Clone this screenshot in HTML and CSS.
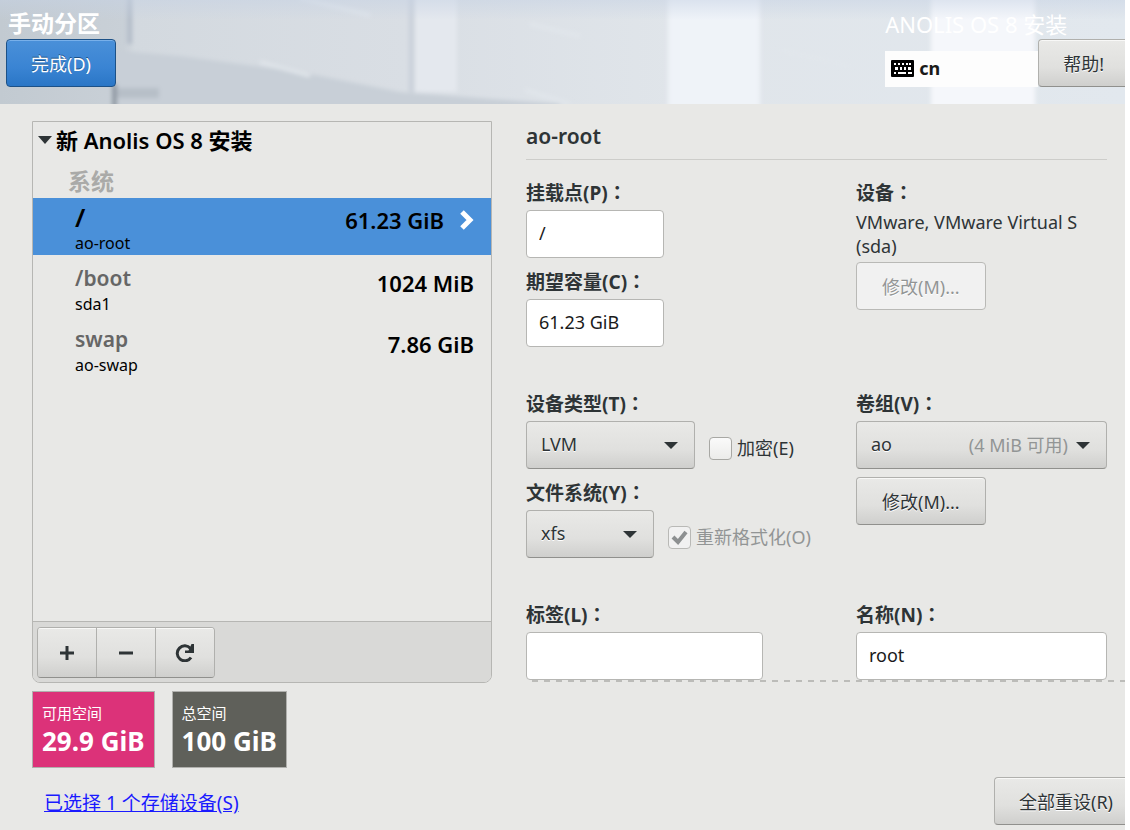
FILE: index.html
```
<!DOCTYPE html>
<html lang="zh-CN">
    <head>
        <meta charset="UTF-8">
        <title>手动分区</title>
        <link rel="stylesheet" href="styles.css">
    </head>
    <body>
        <header class="header">
            <svg class="header-bg" viewBox="0 0 1125 104" preserveAspectRatio="none" aria-hidden="true">
                <defs>
                    <linearGradient id="wall" x1="0" x2="1" y1="0" y2="0">
                        <stop offset="0" stop-color="#c2cad1"/>
                        <stop offset=".11" stop-color="#c9d0d7"/>
                        <stop offset=".12" stop-color="#d3d9df"/>
                        <stop offset=".36" stop-color="#d9dee4"/>
                        <stop offset=".6" stop-color="#e0e5ea"/>
                        <stop offset="1" stop-color="#e2e8ee"/>
                    </linearGradient>
                    <linearGradient id="sky" x1="0" x2="0" y1="0" y2="1">
                        <stop offset="0" stop-color="#c6d2e4" stop-opacity=".5"/>
                        <stop offset="1" stop-color="#c6d2e4" stop-opacity="0"/>
                    </linearGradient>
                    <filter id="soft" x="-10%" y="-20%" width="120%" height="140%"><feGaussianBlur stdDeviation="2"/></filter>
                </defs>
                <rect width="1125" height="104" fill="url(#wall)"/>
                <g filter="url(#soft)">
                    <path d="M110 50L180 56L300 72L400 92L560 104L560 112L110 112z" fill="#c8cfd7"/>
                    <path d="M117 88h42v10h-42z" fill="#b7bfc8"/>
                    <path d="M112 84h5v28h-5z" fill="#8f98a2"/>
                    <path d="M127-6h5v50h-5z" fill="#b3bcc8"/>
                    <path d="M409-6h5v98h-5z" fill="#c9d0d9"/>
                    <path d="M300-2L370 15M260 62L310 76M530 24L580 36M525 90L570 104M780 50L850 66M1035 10L1125 14" stroke="#e2e7ec" stroke-width="3" fill="none"/>
                    <path d="M415-6h42v98h-42z" fill="#e4e8ee"/>
                    <path d="M668-6h92v120h-92z" fill="#eff3f8"/>
                    <path d="M931-6h104v120h-104z" fill="#f5f7fb"/>
                </g>
                <rect width="1125" height="20" fill="url(#sky)"/>
            </svg>
            <div class="header-left">
                <h1 class="title">手动分区</h1>
                <button class="btn btn-primary" type="button">完成(D)</button>
            </div>
            <div class="header-right">
                <div class="product">
                    <div class="product-name">ANOLIS OS 8 安装</div>
                    <div class="keyboard">
                        <svg width="23" height="17" viewBox="0 0 23 17" aria-hidden="true">
                            <rect width="23" height="17" rx="1" fill="#000"/>
                            <path fill="#fff" d="M3 3h2v2h-2zM7 3h2v2h-2zM11 3h2v2h-2zM15 3h2v2h-2zM18 3h2v2h-2zM4 7h3v3h-3zM9 7h2v3h-2zM13 7h2v3h-2zM17 7h3v3h-3zM3 12h2v2h-2zM7 12h8v2h-8zM17 12h4v2h-4z"/>
                        </svg>
                        <span>cn</span>
                    </div>
                </div>
                <button class="btn btn-cut btn-help" type="button">帮助!</button>
            </div>
        </header>

        <main class="main">
            <section class="panel">
                <div class="tree">
                    <h2 class="tree-title">
                        <svg width="14" height="8" viewBox="0 0 14 8" aria-hidden="true"><path d="M0 0h14L7 8z" fill="#2e3436"/></svg>
                        新 Anolis OS 8 安装
                    </h2>
                    <h3 class="group">系统</h3>
                    <ul class="parts">
                        <li class="part on">
                            <div>
                                <div class="mount">/</div>
                                <div class="dev">ao-root</div>
                            </div>
                            <div class="size">61.23 GiB</div>
                            <svg class="arrow" width="14" height="20" viewBox="0 0 14 20" aria-hidden="true"><path d="M2 2l8 8-8 8" fill="none" stroke="#fff" stroke-width="5"/></svg>
                        </li>
                        <li class="part">
                            <div>
                                <div class="mount">/boot</div>
                                <div class="dev">sda1</div>
                            </div>
                            <div class="size">1024 MiB</div>
                        </li>
                        <li class="part">
                            <div>
                                <div class="mount">swap</div>
                                <div class="dev">ao-swap</div>
                            </div>
                            <div class="size">7.86 GiB</div>
                        </li>
                    </ul>
                </div>
                <div class="toolbar">
                    <div class="tools">
                        <button type="button" aria-label="添加">
                            <svg width="16" height="16" viewBox="0 0 16 16"><path d="M8 1v14M1 8h14" stroke="#2e3436" stroke-width="3"/></svg>
                        </button>
                        <button type="button" aria-label="删除">
                            <svg width="16" height="16" viewBox="0 0 16 16"><path d="M1 8h14" stroke="#2e3436" stroke-width="3"/></svg>
                        </button>
                        <button type="button" aria-label="重新载入">
                            <svg width="20" height="18" viewBox="0 0 20 18"><path d="M16 13.500A7.500 7.500 0 1 1 15.500 4.500" fill="none" stroke="#2e3436" stroke-width="3"/><path d="M19 0v9h-9v-2.500h3.500L16.500 0z" fill="#2e3436"/></svg>
                        </button>
                    </div>
                </div>
            </section>

            <form class="detail">
                <h2 class="detail-title">ao-root</h2>
                <div class="fields">
                    <div class="cell">
                        <label class="label" for="mount">挂载点(P)<span lang="zh-TW">：</span></label>
                        <input class="input short" id="mount" type="text" value="/">
                        <label class="label" for="capacity">期望容量(C)<span lang="zh-TW">：</span></label>
                        <input class="input short" id="capacity" type="text" value="61.23 GiB">
                    </div>
                    <div class="cell">
                        <div class="label">设备<span lang="zh-TW">：</span></div>
                        <p class="device">VMware, VMware Virtual S (sda)</p>
                        <button class="btn" type="button" disabled>修改(M)...</button>
                    </div>
                    <div class="cell">
                        <label class="label" for="type">设备类型(T)<span lang="zh-TW">：</span></label>
                        <div class="line">
                            <select class="select type" id="type"><option>LVM</option></select>
                            <label class="check"><input type="checkbox">加密(E)</label>
                        </div>
                        <label class="label" for="fs">文件系统(Y)<span lang="zh-TW">：</span></label>
                        <div class="line">
                            <select class="select fs" id="fs"><option>xfs</option></select>
                            <label class="check off"><input type="checkbox" checked disabled>重新格式化(O)</label>
                        </div>
                    </div>
                    <div class="cell">
                        <label class="label" for="vg">卷组(V)<span lang="zh-TW">：</span></label>
                        <div class="vg">
                            <select class="select" id="vg"><option>ao</option></select>
                            <span class="free">(4 MiB 可用)</span>
                        </div>
                        <button class="btn" type="button">修改(M)...</button>
                    </div>
                    <div class="cell">
                        <label class="label" for="tag">标签(L)<span lang="zh-TW">：</span></label>
                        <input class="input mid" id="tag" type="text">
                    </div>
                    <div class="cell">
                        <label class="label" for="name">名称(N)<span lang="zh-TW">：</span></label>
                        <input class="input" id="name" type="text" value="root">
                    </div>
                </div>
            </form>
        </main>

        <footer class="footer">
            <div class="tiles">
                <div class="tile pink">
                    <div>可用空间</div>
                    <strong>29.9 GiB</strong>
                </div>
                <div class="tile gray">
                    <div>总空间</div>
                    <strong>100 GiB</strong>
                </div>
            </div>
            <div class="bottom">
                <a href="#">已选择 1 个存储设备(S)</a>
                <button class="btn btn-cut" type="button">全部重设(R)</button>
            </div>
        </footer>
    </body>
</html>
```
FILE: styles.css
```
*{ margin:0; padding:0; box-sizing:border-box; }
html{
    background: #fff;
}
body{
    min-height: 100vh;
    margin-right: 5px;
    display: flex;
    flex-direction: column;
    background: #e8e8e6;
    color: #2e3436;
    font: 18px/24px "Noto Sans","Noto Sans CJK SC",sans-serif;
}
button,input,select{
    font: inherit;
    color: inherit;
}
ul{ list-style: none; }

/* header */
.header{
    position: relative;
    height: 104px;
    display: flex;
    justify-content: space-between;
    overflow: hidden;
}
.header-bg{
    position: absolute;
    top: 0;
    left: 0;
    width: 100%;
    height: 100%;
}
.header-left,.header-right{
    position: relative;
}
.header-left{
    padding: 8px 0 0 6px;
}
.title{
    padding-left: 2px;
    margin-bottom: 1px;
    font-size: 23px;
    line-height: 30px;
    color: #fff;
}
.header-right{
    display: flex;
    align-items: flex-start;
    padding-top: 9px;
}
.product{
    width: 153px;
}
.product-name{
    margin-bottom: 12px;
    font-size: 22px;
    line-height: 30px;
    white-space: nowrap;
    color: #fff;
}
.keyboard{
    height: 36px;
    padding: 0 0 2px 6px;
    display: flex;
    align-items: center;
    gap: 5px;
    background: #fdfdfd;
    color: #1a1a1a;
    font-weight: bold;
}

/* buttons */
.btn{
    height: 48px;
    padding: 2px 25px 0;
    border: 1px solid #b0b0ad;
    border-bottom-color: #90908d;
    border-radius: 4px;
    background: linear-gradient(#e9e9e7,#e0e0de 60%,#cfcfcd);
    box-shadow: inset 0 1px #f8f8f7;
    text-shadow: 0 1px #fff;
    white-space: nowrap;
}
.btn:disabled{
    background: #f1f1f1;
    border-color: #b9b9b6;
    color: #929595;
    box-shadow: none;
}
.btn-primary{
    padding: 2px 24px 0;
    border-color: #1c5187;
    background: linear-gradient(#4a90d9,#3a84d3 60%,#2a76c6);
    box-shadow: inset 0 1px #78b0ea;
    color: #fff;
    text-shadow: 0 -1px #1c5187;
}
.btn-cut{
    padding-right: 12px;
    padding-left: 24px;
    border-right: 0;
    border-radius: 4px 0 0 4px;
}
.btn-help{
    margin-top: 30px;
    padding-right: 21px;
}

/* main */
.main{
    flex: 1;
    padding: 17px 0 0 32px;
    display: grid;
    grid-template-columns: 460fr 599fr;
    gap: 34px;
}
.panel{
    display: flex;
    flex-direction: column;
    border: 1px solid #b6b6b3;
    border-radius: 0 0 8px 8px;
    overflow: hidden;
}
.tree{
    flex: 1;
    color: #000;
}
.tree-title{
    padding: 3px 0 0 5px;
    display: flex;
    align-items: center;
    gap: 4px;
    font-size: 22px;
    line-height: 30px;
    font-weight: 600;
}
.group{
    padding: 11px 0 2px 35px;
    font-size: 23px;
    line-height: 30px;
    color: #aaaaa8;
}
.parts{
    display: flex;
    flex-direction: column;
    gap: 4px;
}
.part{
    height: 57px;
    padding: 5px 17px 0 42px;
    display: flex;
    justify-content: space-between;
}
.part .mount{
    font-size: 21px;
    line-height: 28px;
    font-weight: 600;
    color: #666;
}
.part .dev{
    font-size: 16px;
    line-height: 24px;
}
.part .size{
    margin-top: 4px;
    font-size: 22px;
    line-height: 30px;
    font-weight: 600;
}
.part.on{
    background: #4a90d9;
}
.part.on .mount{
    font-size: 26px;
    color: #000;
}
.part.on .size{
    margin: 2px 16px 0 auto;
}
.arrow{
    margin-top: 7px;
}
.toolbar{
    padding: 5px 4px 4px;
    border-top: 1px solid #b6b6b3;
    background: #d9d9d7;
}
.tools{
    width: 178px;
    height: 51px;
    display: flex;
    border: 1px solid #b0b0ad;
    border-bottom-color: #90908d;
    border-radius: 4px;
    overflow: hidden;
}
.tools button{
    flex: 1;
    display: flex;
    align-items: center;
    justify-content: center;
    border: 0;
    background: linear-gradient(#e9e9e7,#e0e0de 60%,#cfcfcd);
    box-shadow: inset 0 1px #f8f8f7;
}
.tools button + button{
    border-left: 1px solid #b0b0ad;
}

/* detail form */
.detail{
    align-self: start;
    padding: 0 18px 2px 0;
    background: repeating-linear-gradient(90deg,transparent 0 6px,#bcbcb9 6px 12px) left bottom / 100% 2px no-repeat;
}
.detail-title{
    padding-bottom: 8px;
    border-bottom: 1px solid #cdcdca;
    font-size: 21px;
    line-height: 30px;
    font-weight: 600;
}
.fields{
    padding-top: 21px;
    display: grid;
    grid-template-columns: 330fr 251fr;
    row-gap: 45px;
}
.cell{
    display: flex;
    flex-direction: column;
    align-items: flex-start;
}
.label{
    margin-bottom: 4px;
    font-size: 19px;
    line-height: 25px;
    font-weight: bold;
}
/* full-width colon sits in the middle of its box */
.label span{
    font-family: "Noto Sans CJK TC",sans-serif;
    line-height: 1;
}
.input + .label,.line + .label{
    margin-top: 12px;
}
.input{
    width: 100%;
    height: 48px;
    padding: 0 12px 2px;
    border: 1px solid #b6b6b3;
    border-radius: 4px;
    background: #fff;
    color: #1a1a1a;
}
.short{
    width: 138px;
}
.mid{
    width: 237px;
}
.device{
    margin-bottom: 4px;
}
.select{
    height: 48px;
    padding: 0 14px 2px;
    appearance: none;
    border: 1px solid #b0b0ad;
    border-bottom-color: #90908d;
    border-radius: 4px;
    background: url("data:image/svg+xml,%3Csvg xmlns='http://www.w3.org/2000/svg' width='14' height='7'%3E%3Cpath d='M0 0h14L7 7z' fill='%232e3436'/%3E%3C/svg%3E") no-repeat right 16px center,
        linear-gradient(#e9e9e7,#e0e0de 60%,#cfcfcd);
    text-shadow: 0 1px #fff;
}
.type{
    width: 169px;
}
.fs{
    width: 128px;
}
.line{
    display: flex;
    align-items: center;
    gap: 14px;
}
.check{
    padding-top: 6px;
    display: flex;
    align-items: center;
    gap: 5px;
}
.check input{
    width: 23px;
    height: 23px;
    appearance: none;
    border: 1px solid #a8a8a4;
    border-radius: 4px;
    background: linear-gradient(#fafafa,#ececea);
}
.check input:checked{
    background: url("data:image/svg+xml,%3Csvg xmlns='http://www.w3.org/2000/svg' width='17' height='15'%3E%3Cpath d='M2 7l5 5 8-10' fill='none' stroke='%238d9091' stroke-width='4'/%3E%3C/svg%3E") no-repeat center #f1f1f1;
}
.check.off{
    color: #929595;
}
.check.off input{
    border-color: #b9b9b6;
}
.vg{
    position: relative;
    width: 100%;
    margin-bottom: 8px;
}
.vg .select{
    display: block;
    width: 100%;
}
.free{
    position: absolute;
    right: 39px;
    top: 12px;
    color: #929595;
    pointer-events: none;
}

/* footer */
.footer{
    padding: 8px 0 5px 32px;
}
.tiles{
    display: flex;
    gap: 17px;
}
.tile{
    height: 77px;
    padding: 9px 9px 0;
    border: 1px solid #b0b0ad;
    color: #fff;
    font-size: 15px;
}
.tile strong{
    display: block;
    font-size: 26px;
    line-height: 32px;
}
.pink{
    background: #dc3279;
}
.gray{
    background: #5f605a;
}
.bottom{
    padding: 9px 0 0 12px;
    display: flex;
    align-items: center;
    justify-content: space-between;
}
.bottom a{
    padding-top: 3px;
    color: #1a1aff;
    font-size: 19px;
}
```
